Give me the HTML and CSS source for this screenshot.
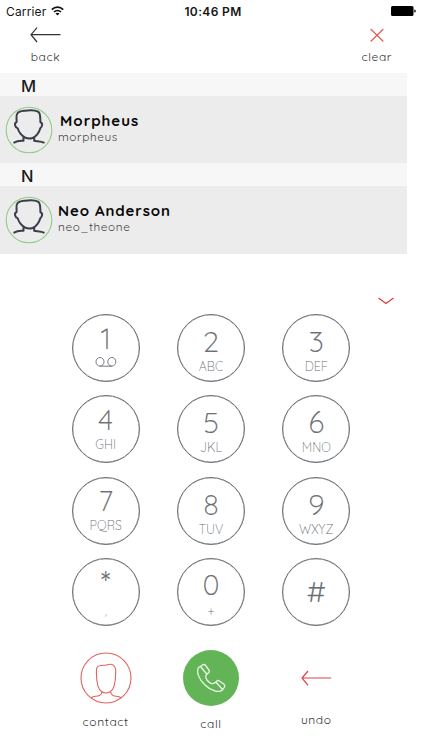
FILE: index.html
```html
<!DOCTYPE html>
<html lang="en">
<head>
<meta charset="utf-8">
<title>Dialer</title>
<link rel="stylesheet" href="styles.css">
</head>
<body>
<svg class="defs" width="0" height="0" aria-hidden="true">
  <symbol id="avatar" viewBox="0 0 48 48">
    <circle cx="24" cy="24" r="22.8" fill="none" stroke="#93ca8b" stroke-width="1.1"/>
    <path d="M12.3 7.5C14 5 17 5 20 4.7C25 4 30 4 33 5.7C36 7.5 35 12 35.5 16.5C38.2 16.5 37.2 21 35.2 22.4C34.2 26.5 30.8 30.8 27.5 32C25 32.8 22.5 32.6 20 31.5C16.8 30 13.500 25.800 12.800 22.400C9.800 21.500 9 17 11.500 16.300C12.100 13 10.500 10 12.300 7.500ZM18.500 31V34.800C15 34.500 11 35.400 8.500 36.800M29.200 31V34.800C33 35.400 36 35 39.500 36.800" fill="none" stroke="#393e48" stroke-width="2" stroke-linejoin="round"/>
  </symbol>
</svg>
<div class="status">
  <span class="carrier">Carrier</span>
  <svg class="wifi" width="13" height="10" viewBox="0 0 13 10"><g fill="none" stroke="#111" stroke-width="1.7"><path d="M.8 3.6C4 .2 9 .2 12.2 3.6"/><path d="M3 6C5 4 8 4 10 6"/></g><path d="M4.5 7.5Q6.5 5.9 8.5 7.5L6.5 9.6Z" fill="#111"/></svg>
  <span class="time">10:46 PM</span>
  <svg class="battery" width="26" height="10" viewBox="0 0 26 10"><rect width="22.5" height="10" rx="1.5"/><path d="M23.3 3.5Q24.8 3.5 24.8 5T23.3 6.5Z"/></svg>
</div>
<header class="nav">
  <div class="nav-item back"><svg width="31" height="16" viewBox="0 0 31 16"><path d="M30.5 7.7H1M7 .7L1 7.7L7 15" fill="none" stroke="#333" stroke-width="1.2"/></svg><span>back</span></div>
  <div class="nav-item clear"><svg width="14" height="16" viewBox="0 0 14 16"><path d="M.7 2L13.3 14.5M13.3 2L.7 14.5" fill="none" stroke="#e45b59" stroke-width="1.2"/></svg><span>clear</span></div>
</header>
<main class="list">
  <h2>M</h2>
  <div class="row morpheus"><svg class="avatar"><use href="#avatar"/></svg><div><b>Morpheus</b><span>morpheus</span></div></div>
  <h2>N</h2>
  <div class="row neo"><svg class="avatar"><use href="#avatar"/></svg><div><b>Neo Anderson</b><span>neo_theone</span></div></div>
</main>
<div class="collapse"><svg width="16" height="8" viewBox="0 0 16 8"><path d="M.5 1L8 6.5L15.5 1" fill="none" stroke="#dd3c40" stroke-width="1.3"/></svg></div>
<section class="keys">
  <div class="key high"><b>1</b><svg width="22" height="10" viewBox="0 0 22 10"><g fill="none" stroke="#777980"><ellipse cx="5" cy="4.8" rx="4" ry="4.3"/><ellipse cx="16.8" cy="4.8" rx="4" ry="4.3"/><path d="M5 9.2H17"/></g></svg></div>
  <div class="key"><b>2</b><span>ABC</span></div>
  <div class="key"><b>3</b><span>DEF</span></div>
  <div class="key high"><b>4</b><span>GHI</span></div>
  <div class="key"><b>5</b><span>JKL</span></div>
  <div class="key"><b>6</b><span>MNO</span></div>
  <div class="key high"><b>7</b><span>PQRS</span></div>
  <div class="key"><b>8</b><span>TUV</span></div>
  <div class="key"><b>9</b><span>WXYZ</span></div>
  <div class="key star"><b>*</b><span>,</span></div>
  <div class="key zero"><b>0</b><span>+</span></div>
  <div class="key hash"><b>#</b></div>
</section>
<footer class="actions">
  <div class="action contact"><svg width="52" height="52" viewBox="0 0 52 52"><g fill="none" stroke="#e4625f" stroke-width="1.1"><circle cx="26" cy="26" r="25"/><path d="M17 15.5C18 13.5 21 13.2 24 13.3C27 13.4 29 11.5 32 12.5C35 13.5 36 17 35.7 21C35.6 29 34.5 37 30.5 39.5C27.5 41.5 24.5 41.5 21.5 39.5C17.5 37 16.5 28 16.4 21C16.4 19 16.3 17 17 15.5ZM21.8 40C21.5 43 19 44.3 15.5 44.3C13.5 44.3 12 45 10.8 46M30.8 40C31 43 33.5 44.3 36.5 44.3C38.5 44.3 40 45 41.2 46"/></g></svg><span>contact</span></div>
  <div class="action call"><svg width="56" height="56" viewBox="0 0 56 56"><circle cx="28" cy="28" r="28" fill="#63b457"/><path d="M15.5 17.5L20 14.8C21 14.3 22 14.5 22.6 15.5L26.2 20.5C26.7 21.4 26.5 22 25.7 22.6C22 25 22 27 24 30C27 34 30 35 33.5 31.5C34.3 30.5 35.2 30.3 36 30.8L41 34.2C42 35 42 36 41.5 37L39.5 40C36 43 28 41 22 35C16 29.5 13 22 15.5 17.5ZM17.5 16.5L23.7 24M32.8 32L39.5 39.5" fill="none" stroke="#e9f6e6" stroke-width="1.3" stroke-linejoin="round"/></svg><span>call</span></div>
  <div class="action undo"><svg width="31" height="16" viewBox="0 0 31 16"><path d="M30.2 8H1M7 1L1 8L7 15.3" fill="none" stroke="#dd4244" stroke-width="1.2"/></svg><span>undo</span></div>
</footer>
</body>
</html>
```
FILE: styles.css
```css
* { box-sizing: border-box; }
body { margin: 0; width: 422px; height: 750px; overflow: hidden; background: #fff; font-family: Quicksand, Lato, sans-serif; color: #333; }
svg { display: block; flex: none; }
.defs { position: absolute; }
.status { height: 22px; display: grid; grid-template-columns: 45px 121px 90px 1fr; align-items: center; padding: 0 5px 0 6px; font: 12px Inter, sans-serif; color: #151515; }
.carrier { letter-spacing: .15px; }
.status .time { justify-self: center; font-weight: 600; letter-spacing: .35px; margin-left: -4px; margin-right: 4px; white-space: nowrap; }
.battery { justify-self: end; fill: #000; }
.nav { height: 51px; display: flex; justify-content: space-between; padding: 5px 30px 0; }
.nav-item { display: flex; flex-direction: column; align-items: center; font-size: 12px; line-height: 16px; letter-spacing: .6px; }
.nav-item span { margin-top: 6px; }
.list { width: 406.5px; height: 181px; background: #ececec; }
.list h2 { margin: 0; height: 23px; padding-left: 21px; background: #f7f7f7; font: 500 16.5px/26px Inter, sans-serif; color: #1c1c1c; }
.row { height: 67px; display: flex; padding: 10px 0 0 5px; }
.avatar { width: 48px; height: 48px; }
.row div { margin-left: 5px; padding-top: 6px; }
.row b { display: block; font-size: 15px; line-height: 18px; letter-spacing: .88px; color: #080808; }
.row span { display: block; font-size: 11.8px; line-height: 14.5px; letter-spacing: .6px; color: #444; }
.row.morpheus b { margin-left: 2px; letter-spacing: 1px; }
.collapse { height: 60px; padding: 43px 0 0 378px; }
.keys { display: grid; grid-template-columns: repeat(3, 68px); column-gap: 37.3px; row-gap: 13.4px; margin-left: 71.7px; }
.key { height: 68px; border: 1.2px solid #6d7077; border-radius: 50%; display: flex; flex-direction: column; align-items: center; padding-top: 12px; color: #6d6f75; box-shadow: inset 0 0 0 .2px #73767c; }
.key b { font-weight: 300; font-size: 29px; line-height: 29px; -webkit-text-stroke: .15px #6d6f75; }
.key span { font-weight: 300; font-size: 12.5px; line-height: 14px; margin-top: 3px; }
.key.high { padding-top: 8.5px; }
.key.high svg { margin-top: 4px; }
.key.star { padding-top: 9px; }
.key.star b { font-size: 32px; }
.key.star span { margin-top: 6px; }
.key.zero { padding-top: 11px; }
.key.zero span { margin-top: 5px; }
.key.hash { padding-top: 18px; }
.actions { display: grid; grid-template-columns: repeat(3, 105.3px); margin: 24px 0 0 53px; }
.action { display: flex; flex-direction: column; align-items: center; font-size: 12px; line-height: 16px; letter-spacing: .6px; }
.contact svg { margin-top: 2px; }
.contact span { margin-top: 10px; }
.call span { margin-top: 10px; }
.undo svg { margin-top: 20px; }
.undo span { margin-top: 26px; }
```
